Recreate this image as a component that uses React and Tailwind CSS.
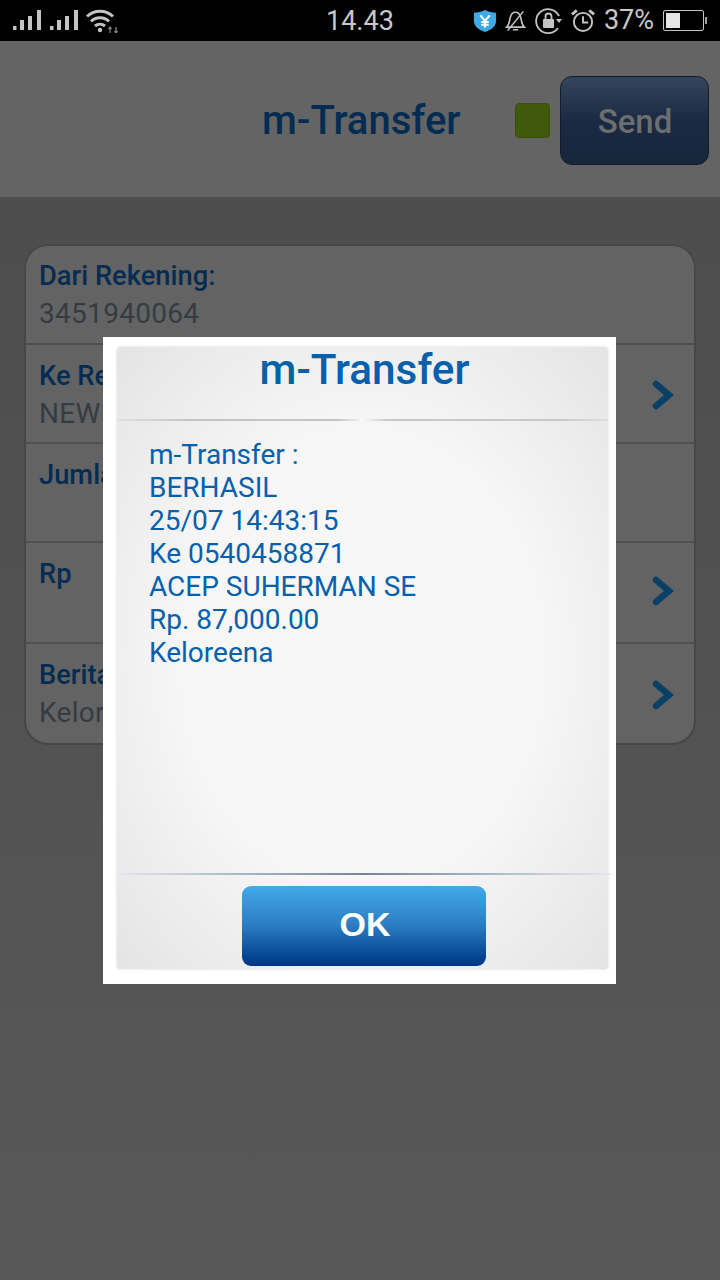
import React from "react";

const font = { fontFamily: "Roboto, sans-serif" };

function Signal() {
  return (
    <svg width="30" height="21" viewBox="0 0 30 21" fill="#c4c4c4">
      <rect x="1" y="16" width="3.5" height="4" />
      <rect x="8" y="10" width="4" height="10" />
      <rect x="16" y="6" width="4" height="14" />
      <rect x="25" y="0" width="4" height="20" />
    </svg>
  );
}

function Wifi() {
  return (
    <svg width="33" height="24" viewBox="0 0 33 24" fill="none" stroke="#c4c4c4" strokeWidth="3">
      <path d="M1 7.5C8 0.5 20 0.5 27 7.5" />
      <path d="M5 12.5C10 7.5 18 7.5 23 12.5" />
      <path d="M9 17C12 14.5 16 14.5 19 17" />
      <circle cx="14" cy="21" r="2.2" fill="#c4c4c4" stroke="none" />
      <path d="M24 24V18M22.5 20L24 18L25.5 20M30 18V24M28.5 22L30 24L31.5 22" stroke="#8a8a8a" strokeWidth="1.2" />
    </svg>
  );
}

function StatusBar() {
  return (
    <div className="flex h-[41px] items-center bg-black pl-3 pr-[13px] text-[#c8c8c8]">
      <div className="flex w-[308px] items-center">
        <Signal />
        <div className="ml-[7px]">
          <Signal />
        </div>
        <div className="ml-[7px]">
          <Wifi />
        </div>
      </div>
      <span className="ml-[6px] mt-[2px] text-[27px] leading-none">14.43</span>
      <div className="ml-auto flex items-center">
        <svg width="24" height="26" viewBox="0 0 26 26">
          <path d="M13 1C17 3 21 4 25 4V13C25 19 19 23 13 25C7 23 1 19 1 13V4C5 4 9 3 13 1Z" fill="#3fa9e6" />
          <path d="M8 7L13 13L18 7M13 13V20M9 14H17M9 17H17" fill="none" stroke="#fff" strokeWidth="2.2" />
        </svg>
        <svg className="ml-[8px]" width="21" height="26" viewBox="0 0 24 26" fill="none" stroke="#c4c4c4" strokeWidth="1.8">
          <path d="M2 20C5 17 5 13 6 9C7 5 9 3 12 3C15 3 17 5 18 9C19 13 19 17 22 20Z" />
          <path d="M9 23H15M3 24L21 2" />
        </svg>
        <svg className="ml-[9px]" width="28" height="28" viewBox="0 0 28 28" fill="none" stroke="#c4c4c4" strokeWidth="1.8">
          <path d="M23 21A12 12 0 1 1 24 9" />
          <path d="M21 12L27 12L24 16Z" fill="#c4c4c4" stroke="none" />
          <rect x="8" y="12" width="11" height="9" rx="1" fill="#c4c4c4" stroke="none" />
          <path d="M10.5 12V9.5A3 3 0 0 1 16.5 9.5V12" />
        </svg>
        <svg className="ml-[8px]" width="24" height="26" viewBox="0 0 25 26" fill="none" stroke="#c4c4c4" strokeWidth="2">
          <circle cx="12.5" cy="14" r="9.5" />
          <path d="M12.5 8V14.5H18" />
          <path d="M1 6L6 2M24 6L19 2" strokeWidth="3" />
        </svg>
        <span className="ml-[9px] text-[27px] leading-none">37%</span>
        <div className="ml-[9px] flex items-center">
          <div className="h-[21px] w-[41px] rounded-[2px] border border-[#c4c4c4] p-[2px]">
            <div className="h-full w-[14px] bg-[#e4e4e4]" />
          </div>
          <div className="ml-[1px] h-[7px] w-[2px] bg-[#a0a0a0]" />
        </div>
      </div>
    </div>
  );
}

function Chevron() {
  return (
    <svg width="22" height="30" viewBox="0 0 22 30" fill="none" stroke="#0a4066" strokeWidth="6.5" strokeLinecap="round" strokeLinejoin="miter">
      <path d="M4 4L17 15L4 26" />
    </svg>
  );
}

function Row({ label, value, chevron, height, chevronTop }) {
  return (
    <div className={`flex items-start border-b-2 border-[#505050] pl-[13px] pr-[20px] pt-[16px] first:pt-[15px] last:border-b-0 ${height}`}>
      <div className="flex-1">
        <p className="text-[27.3px] font-medium leading-[31px] text-[#032c52]">{label}</p>
        {value && <p className="mt-[5px] text-[28px] leading-[33px] tracking-[0.3px] text-[#363b42]">{value}</p>}
      </div>
      {chevron && (
        <div className={chevronTop}>
          <Chevron />
        </div>
      )}
    </div>
  );
}

export default function App() {
  return (
    <div className="relative h-[1280px] w-[720px] overflow-hidden bg-[#565656]" style={font}>
      <StatusBar />
      <div className="flex h-[158px] items-center border-b-2 border-[#4e4e4e] bg-[#646464] pt-[3px]">
        <h1 className="ml-[262px] mt-[1px] text-[40px] font-medium leading-none text-[#032c52]">m-Transfer</h1>
        <div className="ml-[55px] h-[35px] w-[35px] rounded-[4px] border border-[#3a5008] bg-[#3f5a0c]" />
        <div className="ml-[10px] flex h-[89px] w-[149px] items-center justify-center rounded-[12px] border border-[#121c2c] bg-gradient-to-b from-[#36465c] via-[#1b2a42] to-[#18263c] pt-[2px] text-[33px] font-medium text-[#6c6e70]">
          Send
        </div>
      </div>
      <div className="bg-gradient-to-b from-[#4d4d4d] to-[#585858] px-[24px] pt-[45px] pb-[535px]">
        <div className="rounded-[24px] border-2 border-[#474747] bg-[#636363]">
          <Row label="Dari Rekening:" value="3451940064" height="h-[99px]" />
          <Row label="Ke Rekening" value="NEW!" chevron chevronTop="mt-[19px]" height="h-[99px]" />
          <Row label="Jumlah" height="h-[99px]" />
          <Row label="Rp" chevron chevronTop="mt-[17px]" height="h-[101px]" />
          <Row label="Berita" value="Keloreena" chevron chevronTop="mt-[20px]" height="h-[99px]" />
        </div>
      </div>

      <div className="absolute left-[103px] top-[337px] h-[647px] w-[513px] bg-white pl-[14px] pr-[8px] pt-[10px] pb-[15px]">
        <div className="flex h-full flex-col rounded-[3px] bg-[radial-gradient(ellipse_at_center,_#f7f7f7_50%,_#e4e4e4_100%)] shadow-[0_0_3px_#d8d8d8]">
          <div className="h-[74px] border-b-2 border-transparent pl-[4px] text-center [border-image:linear-gradient(to_right,#e0e0e0,#c4c4c4_15%,#c4c4c4_45%,#f8f8f8_50%,#c8c8c8_55%,#c8c8c8_90%,#e0e0e0)_1]">
            <h2 className="text-[42.3px] font-medium leading-[46px] text-[#0560ac]">m-Transfer</h2>
          </div>
          <div className="h-[452px] pl-[32px] pt-[17px] text-[28px] leading-[33px] text-[#0560ac]">
            <p>m-Transfer :</p>
            <p>BERHASIL</p>
            <p>25/07 14:43:15</p>
            <p>Ke 0540458871</p>
            <p>ACEP SUHERMAN SE</p>
            <p>Rp. 87,000.00</p>
            <p>Keloreena</p>
          </div>
          <div className="h-[2px] w-[494px] bg-gradient-to-r from-[#e6e8ee] via-[#78829c] to-[#e6e8ee]" />
          <div className="flex flex-1 justify-center pl-[3px] pt-[11px]">
            <div
              className="flex h-[80px] w-[244px] items-center justify-center rounded-[9px] bg-gradient-to-b from-[#43aae9] via-[#2a7cc0] to-[#003582] pb-[3px] pl-[2px] text-[34px] font-bold text-white"
              style={{ fontFamily: "'Liberation Sans', sans-serif" }}
            >
              OK
            </div>
          </div>
        </div>
      </div>
    </div>
  );
}
